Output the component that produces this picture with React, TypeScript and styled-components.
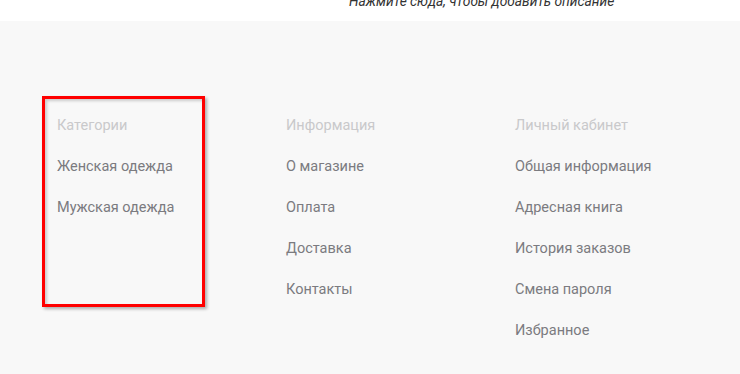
import React from 'react'
import styled, { createGlobalStyle } from 'styled-components'

const GlobalStyle = createGlobalStyle`
  html, body {
    margin: 0;
    padding: 0;
    background: #f8f8f8;
  }
  body {
    font-family: Roboto, 'Noto Sans', sans-serif;
  }
`

const TopStrip = styled.div`
  height: 21px;
  background: #ffffff;
  overflow: hidden;
  padding-left: 349px;
`

const Description = styled.div`
  margin-top: -8px;
  font-size: 13.8px;
  line-height: 18px;
  font-style: italic;
  color: #333333;
  white-space: nowrap;
`

const Footer = styled.footer`
  background: #f8f8f8;
  padding: 75px 0 0 57px;
  height: 353px;
  box-sizing: border-box;
  display: grid;
  grid-template-columns: repeat(3, 229px);
  align-items: start;
`

const Column = styled.div`
  position: relative;
  display: flex;
  flex-direction: column;
  padding-top: 9px;
`

const Highlight = styled.div`
  position: absolute;
  left: -15px;
  top: 0;
  width: 163px;
  height: 211px;
  box-sizing: border-box;
  border: 3px solid #ff0000;
  box-shadow: 2px 2px 3px rgba(0, 0, 0, 0.3), inset 2px 2px 3px rgba(0, 0, 0, 0.18);
  pointer-events: none;
`

const Heading = styled.div`
  font-size: 14.5px;
  line-height: 41px;
  color: #c9c9cb;
`

const Item = styled.a`
  font-size: 14.5px;
  line-height: 41px;
  color: #7b7b80;
  text-decoration: none;
  white-space: nowrap;
`

const columns = [
  { title: 'Категории', items: ['Женская одежда', 'Мужская одежда'], highlight: true },
  { title: 'Информация', items: ['О магазине', 'Оплата', 'Доставка', 'Контакты'] },
  {
    title: 'Личный кабинет',
    items: ['Общая информация', 'Адресная книга', 'История заказов', 'Смена пароля', 'Избранное']
  }
]

export default function App() {
  return (
    <>
      <GlobalStyle />
      <TopStrip>
        <Description>Нажмите сюда, чтобы добавить описание</Description>
      </TopStrip>
      <Footer>
        {columns.map((col) => (
          <Column key={col.title}>
            {col.highlight && <Highlight />}
            <Heading>{col.title}</Heading>
            {col.items.map((item) => (
              <Item key={item} href="#">
                {item}
              </Item>
            ))}
          </Column>
        ))}
      </Footer>
    </>
  )
}
